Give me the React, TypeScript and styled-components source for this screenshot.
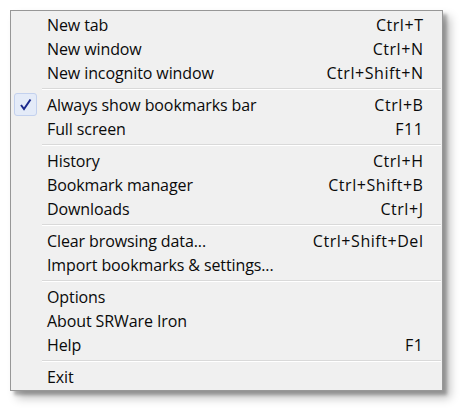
import React from "react";
import styled, { createGlobalStyle } from "styled-components";

const Global = createGlobalStyle`
  html, body { margin: 0; padding: 0; background: #ffffff; }
  body { font-family: "Open Sans", "Noto Sans", sans-serif; }
`;

const Page = styled.div`
  padding: 10px 0 0 10px;
  width: 461px;
  height: 409px;
  box-sizing: border-box;
`;

const Menu = styled.div`
  width: 433px;
  box-sizing: border-box;
  border: 1px solid #979797;
  background: #f0f0f0;
  padding: 2px 0 1px 0;
  box-shadow: 4px 4px 3px rgba(0, 0, 0, 0.25), 7px 7px 9px rgba(0, 0, 0, 0.25);
  display: flex;
  flex-direction: column;
`;

const Row = styled.div`
  position: relative;
  display: flex;
  align-items: center;
  justify-content: space-between;
  height: 24px;
  padding: 0 19px 0 36px;
  font-size: 16px;
  color: #0a0a0a;
  letter-spacing: -0.1px;
`;

const Label = styled.span`
  white-space: nowrap;
`;

const Shortcut = styled.span`
  white-space: nowrap;
  letter-spacing: 0.55px;
  margin-right: -0.5px;
`;

const CheckBox = styled.span`
  position: absolute;
  left: 3px;
  top: 0px;
  width: 23px;
  height: 23px;
  box-sizing: border-box;
  border: 1px solid #c3d1ee;
  border-radius: 3px;
  background: #e4ebf8;
  display: flex;
  align-items: center;
  justify-content: center;
`;

const Separator = styled.div`
  height: 8px;
  display: flex;
  align-items: center;
  padding-left: 31px;
`;

const SepLine = styled.div`
  flex: 1;
  height: 1px;
  background: #d9d9d9;
  border-bottom: 1px solid #ffffff;
  margin-right: 1px;
`;

type Item = { label: string; key?: string; checked?: boolean } | "sep";

const items: Item[] = [
  { label: "New tab", key: "Ctrl+T" },
  { label: "New window", key: "Ctrl+N" },
  { label: "New incognito window", key: "Ctrl+Shift+N" },
  "sep",
  { label: "Always show bookmarks bar", key: "Ctrl+B", checked: true },
  { label: "Full screen", key: "F11" },
  "sep",
  { label: "History", key: "Ctrl+H" },
  { label: "Bookmark manager", key: "Ctrl+Shift+B" },
  { label: "Downloads", key: "Ctrl+J" },
  "sep",
  { label: "Clear browsing data...", key: "Ctrl+Shift+Del" },
  { label: "Import bookmarks & settings..." },
  "sep",
  { label: "Options" },
  { label: "About SRWare Iron" },
  { label: "Help", key: "F1" },
  "sep",
  { label: "Exit" },
];

const Check = () => (
  <svg width="13" height="13" viewBox="0 0 13 13">
    <path d="M2 7 L5 11 L11.5 1.5" fill="none" stroke="#1c2a8c" strokeWidth="2" strokeLinejoin="miter" />
  </svg>
);

export default function App() {
  return (
    <>
      <Global />
      <Page>
        <Menu>
          {items.map((it, i) =>
            it === "sep" ? (
              <Separator key={i}>
                <SepLine />
              </Separator>
            ) : (
              <Row key={i}>
                {it.checked && (
                  <CheckBox>
                    <Check />
                  </CheckBox>
                )}
                <Label>{it.label}</Label>
                {it.key && <Shortcut>{it.key}</Shortcut>}
              </Row>
            )
          )}
        </Menu>
      </Page>
    </>
  );
}
